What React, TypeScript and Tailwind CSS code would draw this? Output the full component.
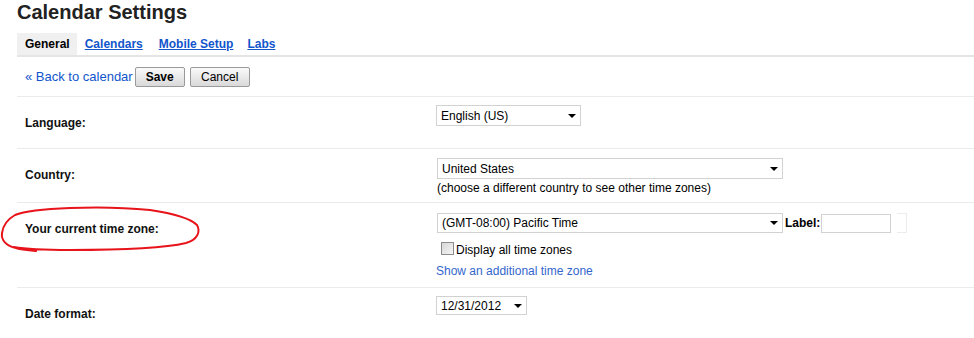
import React from 'react';

const Caret: React.FC = () => (
    <div className="w-0 h-0 border-l-[4px] border-r-[4px] border-t-[4px] border-l-transparent border-r-transparent border-t-black" />
);

const FakeSelect: React.FC<{ text: string; className: string }> = ({ text, className }) => (
    <div className={`flex items-center justify-between border border-[#d2d2d2] bg-white pl-[4px] pr-[4px] text-[12px] leading-[14px] text-black ${className}`}>
        <span>{text}</span>
        <Caret />
    </div>
);

const Divider: React.FC = () => <div className="h-px bg-[#ebebeb]" />;

const RowLabel: React.FC<{ children: React.ReactNode }> = ({ children }) => (
    <div className="w-[419px] shrink-0 pl-2 pt-[19px] text-[12px] leading-[14px] font-bold text-[#111]">{children}</div>
);

export default function App() {
    return (
        <div className="relative w-[974px] h-[338px] overflow-hidden bg-white font-['Liberation_Sans',Arial,sans-serif] text-[#222]">
            <div className="pl-[17px]">
                {/* Title */}
                <h1 className="pt-[1px] text-[20px] leading-[23px] font-bold text-[#222]">Calendar Settings</h1>

                {/* Tabs */}
                <div className="mt-[9px] flex h-[22px] items-stretch text-[12px] font-bold">
                    <div className="flex items-center pl-2 pr-[7px] bg-[#f0f0f0] text-black">General</div>
                    <a href="#" className="flex items-center px-2 text-[#15c] underline">Calendars</a>
                    <a href="#" className="flex items-center px-2 text-[#15c] underline">Mobile Setup</a>
                    <a href="#" className="flex items-center pl-[6px] text-[#15c] underline">Labs</a>
                </div>
                <div className="h-[2px] bg-[#e5e5e5]" />

                {/* Actions */}
                <div className="flex h-[39px] items-center pl-2">
                    <a href="#" className="text-[13px] leading-[15px] text-[#15c]">« Back to calendar</a>
                    <button className="ml-[2px] h-[20px] w-[50px] rounded-[2px] border border-[#9a9a9a] bg-gradient-to-b from-[#fafafa] to-[#d9d9d9] text-[12px] font-bold text-black">
                        Save
                    </button>
                    <button className="ml-[5px] h-[20px] w-[60px] rounded-[2px] border border-[#9a9a9a] bg-gradient-to-b from-[#fafafa] to-[#d9d9d9] text-[12px] text-black">
                        Cancel
                    </button>
                </div>
                <Divider />

                {/* Language */}
                <div className="flex h-[51px]">
                    <RowLabel>Language:</RowLabel>
                    <div className="pt-[8px]">
                        <FakeSelect text="English (US)" className="w-[145px] h-[21px]" />
                    </div>
                </div>
                <Divider />

                {/* Country */}
                <div className="flex h-[53px]">
                    <RowLabel>Country:</RowLabel>
                    <div className="pt-[9px] pl-[1px]">
                        <FakeSelect text="United States" className="w-[346px] h-[21px]" />
                        <p className="mt-[2px] text-[12px] leading-[14px] text-black">(choose a different country to see other time zones)</p>
                    </div>
                </div>
                <Divider />

                {/* Time zone */}
                <div className="flex h-[84px]">
                    <RowLabel>Your current time zone:</RowLabel>
                    <div className="pt-[10px]">
                        <div className="flex h-[20px] items-center">
                            <FakeSelect text="(GMT-08:00) Pacific Time" className="ml-[1px] w-[346px] h-[20px]" />
                            <span className="ml-[2px] text-[12px] font-bold text-black">Label:</span>
                            <div className="ml-[1px] h-[19px] w-[70px] border border-[#d2d2d2]" />
                            <div className="ml-[6px] h-[20px] w-[10px] border-t border-r border-b border-[#ececec]" />
                        </div>
                        <div className="mt-[10px] flex items-start pl-[5px]">
                            <div className="-mt-[1px] h-[13px] w-[13px] border border-[#8c8c8c] bg-gradient-to-br from-[#d6d6d6] to-[#f6f6f6]" />
                            <span className="ml-[2px] text-[12px] leading-[14px] text-black">Display all time zones</span>
                        </div>
                        <a href="#" className="mt-[7px] block text-[12px] leading-[14px] text-[#36c]">Show an additional time zone</a>
                    </div>
                </div>
                <Divider />

                {/* Date format */}
                <div className="flex h-[60px]">
                    <RowLabel>Date format:</RowLabel>
                    <div className="pt-[8px]">
                        <FakeSelect text="12/31/2012" className="w-[91px] h-[19px]" />
                    </div>
                </div>
            </div>

            {/* Red annotation circle */}
            <svg className="pointer-events-none absolute left-0 top-0" width="974" height="338" viewBox="0 0 974 338">
                <path
                    d="M36 251 C30 250 22 250 16 248 C6 246 1 240 2 233 C3 225 8 219 15 215 C25 211 45 209 70 208 C95 207 120 207 150 210 C170 213 190 218 197 225 C201 232 197 240 186 243 C165 248 120 250 70 250 C45 250 25 249 14 247"
                    fill="none"
                    stroke="#e8141b"
                    strokeWidth="2"
                    strokeLinecap="round"
                />
            </svg>
        </div>
    );
}
